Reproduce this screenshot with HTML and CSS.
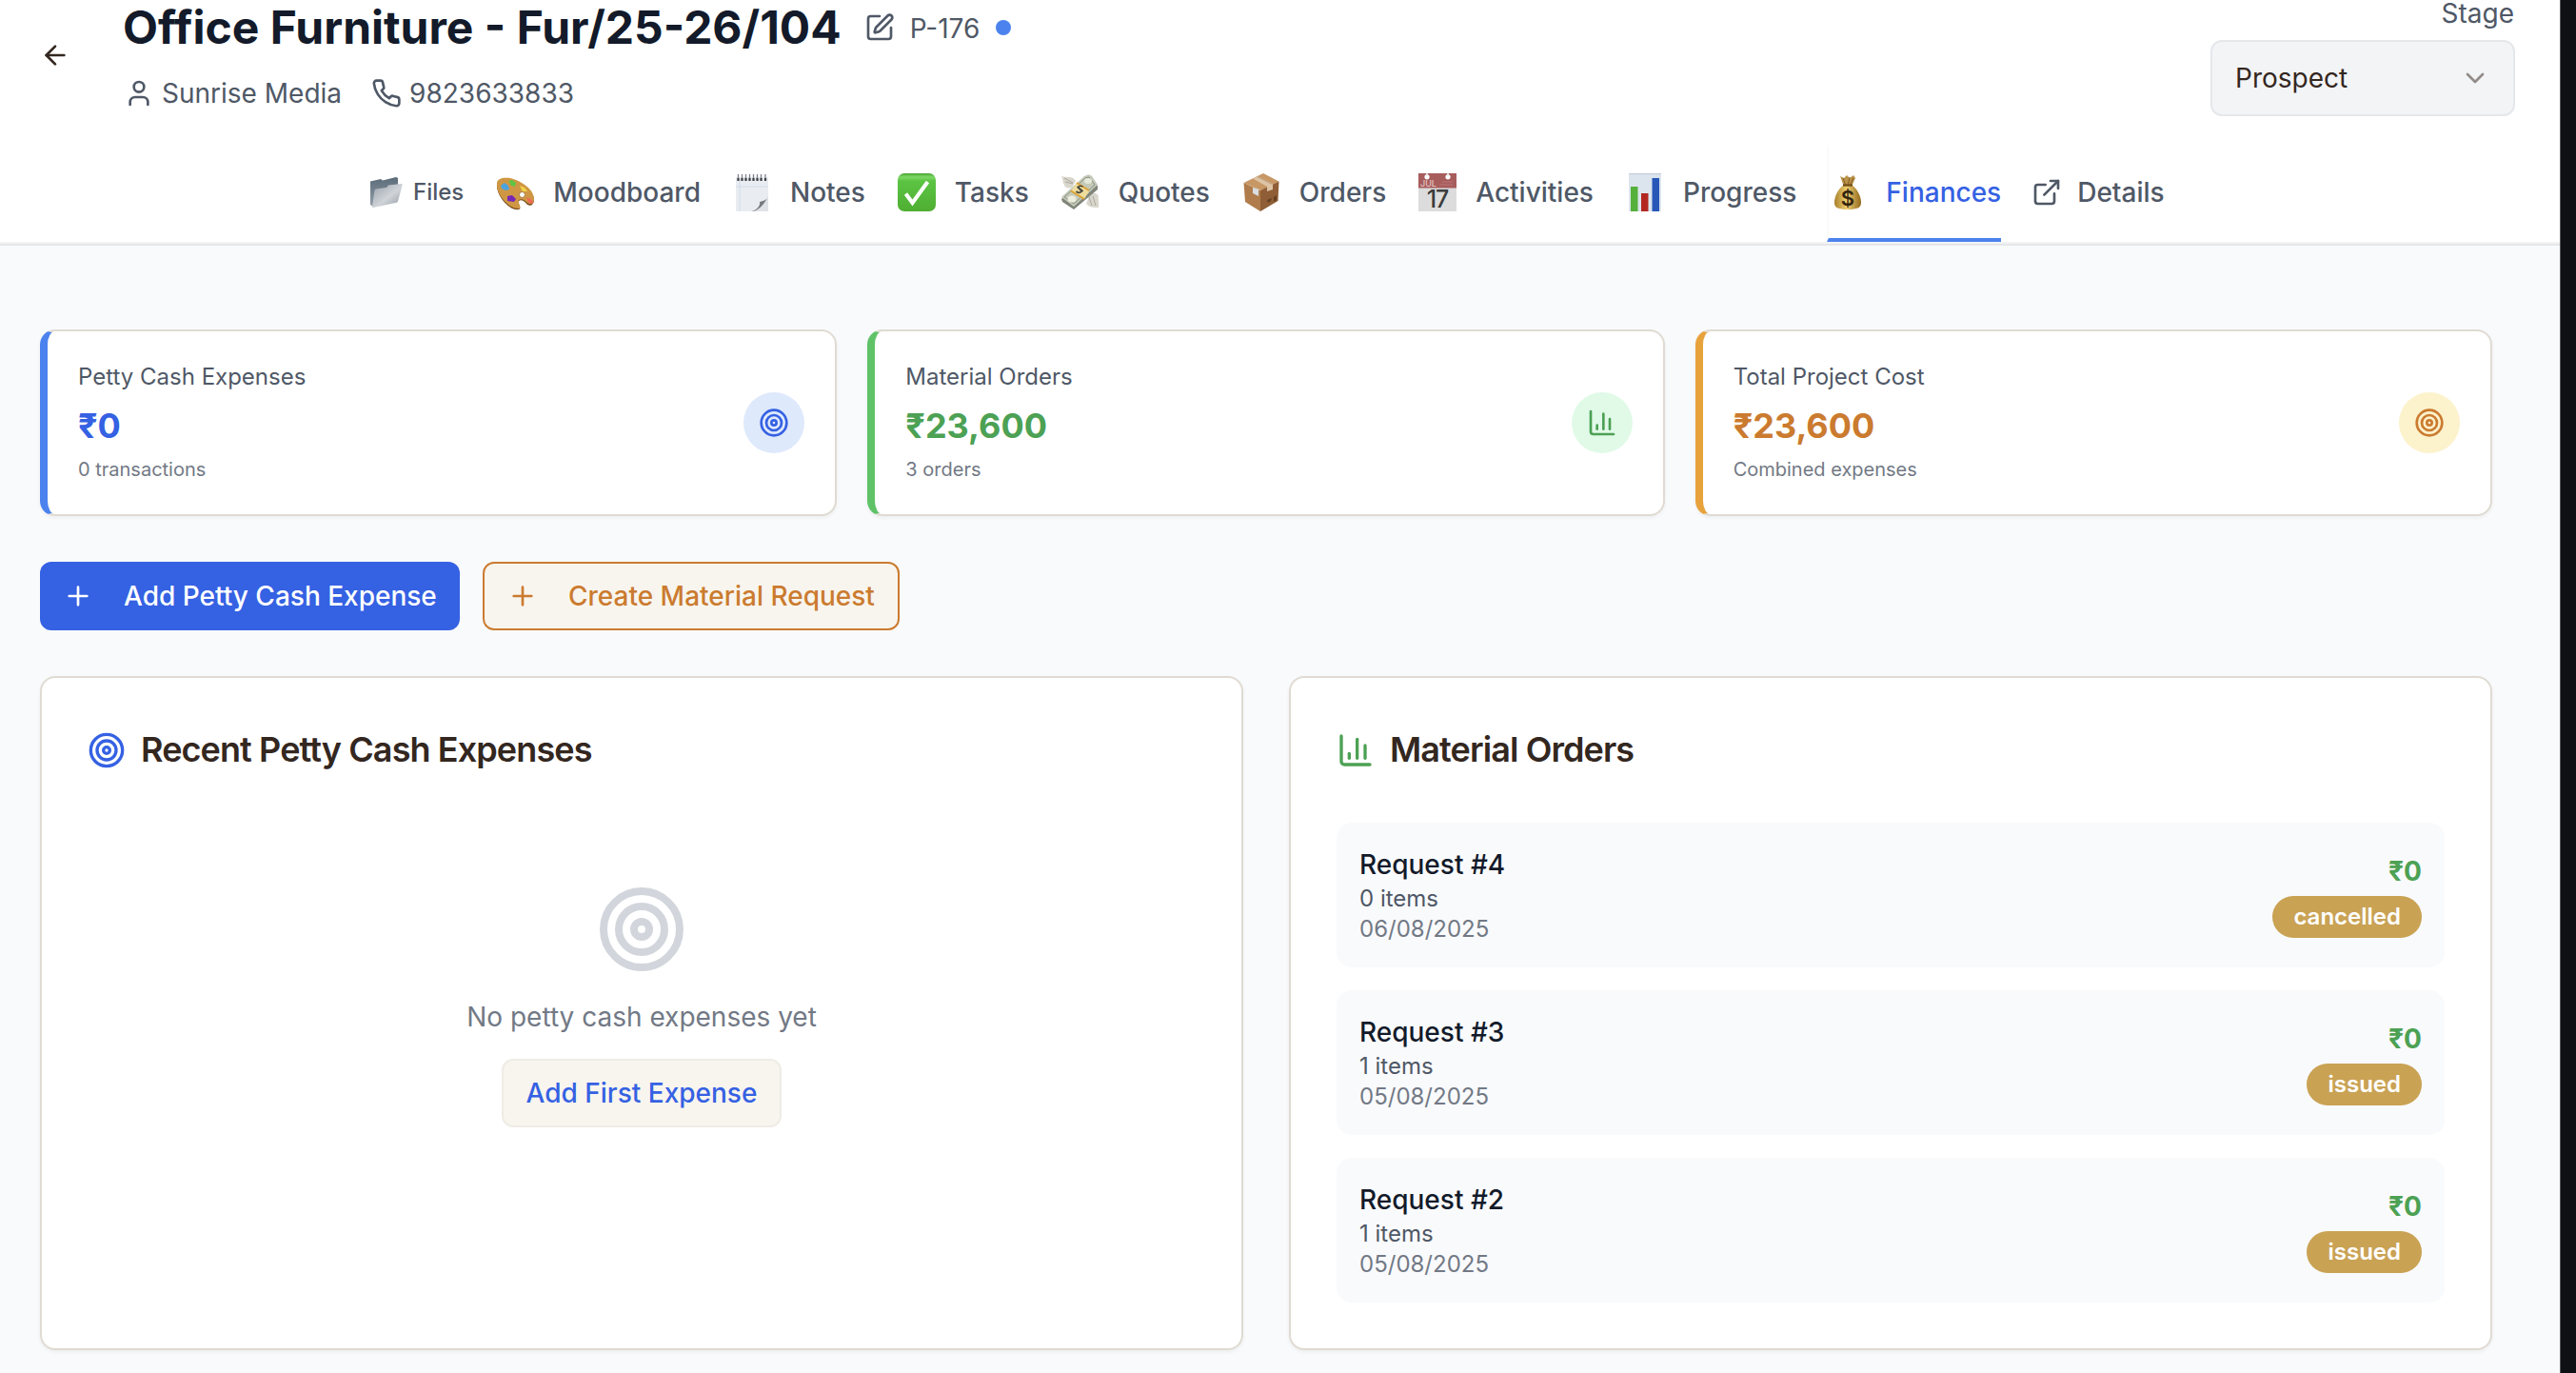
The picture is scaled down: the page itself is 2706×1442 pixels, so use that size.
FILE: index.html
```html
<!DOCTYPE html>
<html lang="en">
<head>
<meta charset="utf-8">
<title>Office Furniture - Finances</title>
<link rel="stylesheet" href="styles.css">
</head>
<body>
<svg class="defs" width="0" height="0" aria-hidden="true">
  <symbol id="target" viewBox="0 0 24 24"><circle cx="12" cy="12" r="10"/><circle cx="12" cy="12" r="6"/><circle cx="12" cy="12" r="2"/></symbol>
  <symbol id="chart" viewBox="0 0 24 24"><path d="M3 3v16a2 2 0 0 0 2 2h16"/><path d="M18 17V9"/><path d="M13 17V5"/><path d="M8 17v-3"/></symbol>
  <symbol id="plus" viewBox="0 0 24 24"><path d="M5 12h14M12 5v14"/></symbol>
</svg>
<div class="app">
  <header class="header">
    <div class="topbar">
      <button class="back" aria-label="Back"><svg class="icon" viewBox="0 0 24 24"><path d="m12 19-7-7 7-7"/><path d="M19 12H5"/></svg></button>
      <div class="project">
        <div class="title-row">
          <h1 class="title">Office Furniture - Fur/25-26/104</h1>
          <svg class="icon edit" viewBox="0 0 24 24"><path d="M12 3H5a2 2 0 0 0-2 2v14a2 2 0 0 0 2 2h14a2 2 0 0 0 2-2v-7"/><path d="M18.375 2.625a1 1 0 0 1 3 3l-9.013 9.014a2 2 0 0 1-.853.505l-2.873.84a.5.5 0 0 1-.62-.62l.84-2.873a2 2 0 0 1 .506-.852z"/></svg>
          <span class="code">P-176</span>
          <span class="dot"></span>
        </div>
        <div class="contact-row">
          <svg class="icon" viewBox="0 0 24 24"><path d="M19 21v-2a4 4 0 0 0-4-4H9a4 4 0 0 0-4 4v2"/><circle cx="12" cy="7" r="4"/></svg>
          <span class="client">Sunrise Media</span>
          <svg class="icon" viewBox="0 0 24 24"><path d="M22 16.92v3a2 2 0 0 1-2.18 2 19.79 19.79 0 0 1-8.63-3.07 19.5 19.5 0 0 1-6-6 19.79 19.79 0 0 1-3.07-8.67A2 2 0 0 1 4.11 2h3a2 2 0 0 1 2 1.72 12.84 12.84 0 0 0 .7 2.81 2 2 0 0 1-.45 2.11L8.09 9.91a16 16 0 0 0 6 6l1.27-1.27a2 2 0 0 1 2.11-.45 12.84 12.84 0 0 0 2.81.7A2 2 0 0 1 22 16.92z"/></svg>
          <span>9823633833</span>
        </div>
      </div>
      <div class="stage">
        <span class="stage-label">Stage</span>
        <div class="select"><span>Prospect</span><svg class="icon chevron" viewBox="0 0 24 24"><path d="m6 9 6 6 6-6"/></svg></div>
      </div>
    </div>
    <nav class="tabs">
      <a class="tab files">
        <svg class="emoji-sm" viewBox="0 0 34 34"><defs><linearGradient id="fb" x2="0" y2="1"><stop stop-color="#5b6b78"/><stop offset="1" stop-color="#93a0aa"/></linearGradient><linearGradient id="ff" x2="1" y2="1"><stop stop-color="#98a1aa"/><stop offset=".55" stop-color="#d0d4d9"/><stop offset="1" stop-color="#8e979f"/></linearGradient></defs><path d="M0 5.500 11 3l2 1.500L27 1l2 1v10L3 32l-3-2z" fill="url(#fb)"/><path d="M6 13.500 17 12l2-2.500L33 8q1 0 .7 1L29 26.500q-.4 1-1.400 1.300L3 33q-1.200.2-1-1L4.500 15q.2-1.200 1.500-1.500z" fill="url(#ff)"/></svg>
        <span>Files</span>
      </a>
      <a class="tab">
        <svg class="emoji" viewBox="0 0 40 40"><path d="M1 12C1 6 8 4 15 6c12 3 25 12 25 22 0 5-4 7-7 5-3-3-5-6-9-4-2 2 4 8 0 9C14 40 0 23 1 12z" fill="#7c5220"/><path d="M1 11C1 5 8 4 15 5c12 3 25 12 25 22 0 5-4 6-7 4-3-3-6-5-9-3-2 2 4 8 0 9C14 38 0 22 1 11z" fill="#cf9743"/><circle cx="27.500" cy="22.500" r="3" fill="#fff" stroke="#98642a" stroke-width=".8"/><path d="M5 13l4-3 4 3 1 4-4 1-4-2z" fill="#4aa3dc"/><path d="m13 8 4-1 4 3-1 4-4-1z" fill="#61c344"/><path d="m25 13 5 2 3 4-5 0z" fill="#f1d347"/><path d="m32 25 6 3 1 4-5-1z" fill="#ee6b58"/><path d="m12 24 5-1 4 4-2 3-7-1z" fill="#7926b5"/></svg>
        <span>Moodboard</span>
      </a>
      <a class="tab">
        <svg class="emoji" viewBox="0 0 40 40"><path d="M3 4h34v23L24 40H3z" fill="#e9edf2"/><path d="M3 14h34M7 7v33" stroke="#ccd7e4" stroke-width=".8"/><path d="M37 24v16H20c7-2 9-5 9-10 3 0 6-2 8-6z" fill="#dfe2e6"/><path d="M37 24c-2 5-6 5-9 6 1 5-4 9-9 10 7 0 13-6 18-16z" fill="#777b80"/><path d="M5.500 1v6M9.500 1v6M13.500 1v6M17.500 1v6M21.500 1v6M25.500 1v6M29.500 1v6M34 1v6" stroke="#7e838b" stroke-width="1.300"/><path d="M5.500 5v3M9.500 5v3M13.500 5v3M17.500 5v3M21.500 5v3M25.500 5v3M29.500 5v3M34 5v3" stroke="#3f4247" stroke-width="2.200"/></svg>
        <span>Notes</span>
      </a>
      <a class="tab">
        <svg class="emoji" viewBox="0 0 40 40"><defs><linearGradient id="ck" x2="0" y2="1"><stop stop-color="#48a434"/><stop offset=".1" stop-color="#7ed866"/><stop offset=".2" stop-color="#5cc443"/><stop offset="1" stop-color="#4fae32"/></linearGradient></defs><rect width="40" height="40" rx="7" fill="url(#ck)"/><path d="M8.500 21.500 15.500 31 31.500 9" fill="none" stroke="#fff" stroke-width="4"/></svg>
        <span>Tasks</span>
      </a>
      <a class="tab">
        <svg class="emoji" viewBox="0 0 40 40"><path d="M0 3c5 2 12-1 15 5l-4 7c-4 1-8 0-8-3C1 10 2 7 0 3zM39 36c-5 0-10 0-13-4l4-10c5-3 8 0 9 2-1 3 1 6 0 12z" fill="#d9d7cd"/><path d="m3 5 9 5M4 9l8 2M29 25l3 9M33 24l3 10" stroke="#aba99d" fill="none"/><path d="M0 27 28 6 38 13v4L13 38 1 30z" fill="#80857a"/><path d="M0 25 24 3q5-3 8 0l6 9-25 23z" fill="#c5c9b9"/><path d="m3 25 22-20 4-1 6 8-22 20z" fill="none" stroke="#8c9382"/><ellipse cx="28" cy="8" rx="4" ry="3" fill="#e5e8da"/><ellipse cx="11" cy="27" rx="4.500" ry="3.500" fill="#edeede"/><path d="M10 18.500 16 10l13 9-5 8z" fill="#eedc9c"/><path d="m10 18.500 14 8.500M16 10l13 8" stroke="#dda230" stroke-width="1.800"/><path d="M22.500 14c-4-2-6 1-3 3s0 5-4 2m1-5 6 5" stroke="#47473e" stroke-width="1.700" fill="none"/></svg>
        <span>Quotes</span>
      </a>
      <a class="tab">
        <svg class="emoji" viewBox="0 0 40 40"><path d="M1.500 10 22 0l16.500 8.500L20 18z" fill="#c79765"/><path d="M1.500 10 19 18v22L3 30z" fill="#b07c4b"/><path d="m19 18 19.500-9.500L37.500 29 19 40z" fill="#8f5e37"/><path d="m11 5.500 5-2.500 16 8v6l-6 2v-5z" fill="#dcc3a3"/><path d="m15.500 3.500 16 8" stroke="#b6926d" stroke-width=".8"/><path d="m11 15 6 2v7l-6-3z" fill="#d9dde1"/><path d="m26 28 5-2-1 3-3 2zM33 25l3-2v5l-3 2z" fill="#65401f"/></svg>
        <span>Orders</span>
      </a>
      <a class="tab">
        <svg class="emoji" viewBox="0 0 40 40"><path d="M0 0h40v40H0z" fill="#dcdcdc"/><path d="M0 0h40v15.500H0z" fill="#a85d5d"/><circle cx="9" cy="3.800" r="2.600" fill="#fff"/><circle cx="31" cy="3.800" r="2.600" fill="#fff"/><path d="M9 0v3M31 0v3" stroke="#eee" stroke-width="1.500"/><path d="M22 12h14M25 9h11" stroke="#b87575"/><text x="2" y="14" class="cal-month">JUL</text><text x="20" y="36" text-anchor="middle" class="cal-day">17</text></svg>
        <span>Activities</span>
      </a>
      <a class="tab">
        <svg class="emoji" viewBox="0 0 40 40"><path d="M3 0h34v40H3z" fill="#dce5ee"/><path d="M3 .6h34" stroke="#bccad8"/><path d="M5 14h7.500v26H5z" fill="#55b03c"/><path d="M16 21h7.500v19H16z" fill="#b32720"/><path d="M27.500 5H35v35h-7.500z" fill="#2758b8"/></svg>
        <span>Progress</span>
      </a>
      <a class="tab active">
        <svg class="emoji" viewBox="0 0 40 40"><defs><linearGradient id="mb"><stop stop-color="#a87f2a"/><stop offset=".45" stop-color="#edcf72"/><stop offset="1" stop-color="#94691d"/></linearGradient></defs><path d="M12 3l4 2 3-3 3 3 4-3 2 3-4 9h-8z" fill="#bb924a"/><path d="m15 5 3 8M22 4l-2 9M26 5l-4 8" stroke="#835f26" fill="none"/><path d="M16 12h8c6 4 10 12 10 19 0 5-4 7-14 7S6 36 6 31c0-7 4-15 10-19z" fill="url(#mb)"/><path d="M15 12.500h10" stroke="#75521a" stroke-width="2.400"/><text x="20" y="34" text-anchor="middle" class="money">$</text></svg>
        <span>Finances</span>
      </a>
      <a class="tab details">
        <svg class="icon" viewBox="0 0 24 24"><path d="M15 3h6v6"/><path d="M10 14 21 3"/><path d="M18 13v6a2 2 0 0 1-2 2H5a2 2 0 0 1-2-2V8a2 2 0 0 1 2-2h6"/></svg>
        <span>Details</span>
      </a>
    </nav>
  </header>
  <main class="content">
    <section class="stats">
      <article class="stat blue"><div class="stat-text"><p class="stat-label">Petty Cash Expenses</p><p class="stat-value">₹0</p><p class="stat-sub">0 transactions</p></div><span class="stat-icon"><svg class="icon"><use href="#target"/></svg></span></article>
      <article class="stat green"><div class="stat-text"><p class="stat-label">Material Orders</p><p class="stat-value">₹23,600</p><p class="stat-sub">3 orders</p></div><span class="stat-icon"><svg class="icon"><use href="#chart"/></svg></span></article>
      <article class="stat orange"><div class="stat-text"><p class="stat-label">Total Project Cost</p><p class="stat-value">₹23,600</p><p class="stat-sub">Combined expenses</p></div><span class="stat-icon"><svg class="icon"><use href="#target"/></svg></span></article>
    </section>
    <div class="actions">
      <button class="btn primary"><svg class="icon"><use href="#plus"/></svg>Add Petty Cash Expense</button>
      <button class="btn outline"><svg class="icon"><use href="#plus"/></svg>Create Material Request</button>
    </div>
    <section class="panels">
      <article class="panel">
        <h2 class="panel-title"><svg class="icon blue-ink"><use href="#target"/></svg><span>Recent Petty Cash Expenses</span></h2>
        <div class="empty">
          <svg class="icon"><use href="#target"/></svg>
          <p>No petty cash expenses yet</p>
          <button class="btn soft">Add First Expense</button>
        </div>
      </article>
      <article class="panel">
        <h2 class="panel-title"><svg class="icon green-ink"><use href="#chart"/></svg><span>Material Orders</span></h2>
        <div class="orders">
          <div class="order"><div><p class="order-name">Request #4</p><p class="order-items">0 items</p><p class="order-date">06/08/2025</p></div><div class="order-side"><span class="amount">₹0</span><span class="badge">cancelled</span></div></div>
          <div class="order"><div><p class="order-name">Request #3</p><p class="order-items">1 items</p><p class="order-date">05/08/2025</p></div><div class="order-side"><span class="amount">₹0</span><span class="badge">issued</span></div></div>
          <div class="order"><div><p class="order-name">Request #2</p><p class="order-items">1 items</p><p class="order-date">05/08/2025</p></div><div class="order-side"><span class="amount">₹0</span><span class="badge">issued</span></div></div>
        </div>
      </article>
    </section>
  </main>
</div>
</body>
</html>
```
FILE: styles.css
```css
* { box-sizing: border-box; margin: 0; padding: 0; }
body { background: #0e1014; font-family: Inter, "Liberation Sans", sans-serif; font-size: 28px; line-height: 40px; color: #33271f; overflow: hidden; }
button { font: inherit; border: 0; background: none; color: inherit; }
.defs { display: block; }
.app { width: 2690px; height: 1442px; background: #f9fafc; border-right: 1px solid #55585d; overflow: hidden; }
.icon { width: 32px; height: 32px; flex: none; fill: none; stroke: currentColor; stroke-width: 2; stroke-linecap: round; stroke-linejoin: round; }

/* Header */
.header { height: 258px; background: #fff; border-bottom: 2px solid #e5e7ea; box-shadow: inset 0 -2px #f3f3f4; }
.topbar { display: flex; height: 154px; padding: 0 47px 0 42px; }
.back { width: 32px; height: 32px; margin-top: 42px; }
.back .icon { display: block; }
.project { margin-left: 56px; flex: 1; color: #4f5866; }
.title-row { display: flex; align-items: center; height: 58px; }
.title { margin-left: -1px; font-size: 48px; line-height: 58px; font-weight: 700; color: #131a2a; white-space: nowrap; }
.edit { margin-left: 24px; }
.code { margin-left: 16px; padding-top: 1px; }
.dot { width: 16px; height: 16px; margin-left: 17px; border-radius: 50%; background: #4c82ee; }
.contact-row { display: flex; align-items: center; height: 80px; gap: 8px; }
.client { margin-right: 23px; }
.stage { display: flex; flex-direction: column; align-items: flex-end; color: #4f5866; }
.stage-label { height: 42px; line-height: 28px; padding-right: 1px; }
.select { display: flex; align-items: center; justify-content: space-between; width: 320px; height: 80px; padding: 0 24px; border: 2px solid #e5e7eb; border-radius: 12px; background: #f3f4f6; color: #33271f; }
.chevron { opacity: .5; }
.tabs { display: flex; height: 100px; padding-left: 387px; gap: 32px; font-weight: 500; color: #4f5866; }
.tab { display: flex; align-items: center; gap: 20px; height: 100px; border: 2px solid transparent; border-width: 0 0 4px 2px; white-space: nowrap; }
.tab.files { gap: 11px; font-size: 24px; }
.tab.details { gap: 16px; border-left: 0; }
.tab.active { color: #3561e3; border-color: #fafafb; border-bottom-color: #4c82ee; }
.emoji { width: 40px; height: 40px; flex: none; overflow: visible; }
.emoji-sm { width: 34px; height: 34px; flex: none; }
.cal-month { font: 500 9px Inter, sans-serif; fill: #e2c4c4; }
.cal-day { font: 500 25px Inter, sans-serif; fill: #3c3c3c; letter-spacing: -1px; }
.money { font: 600 22px Inter, sans-serif; fill: #33240d; }

/* Summary cards */
.content { padding: 88px 71px 0 42px; }
.stats { display: grid; grid-template-columns: repeat(3, 1fr); gap: 32px; }
.stat { display: flex; align-items: center; justify-content: space-between; height: 196px; padding: 32px; border: 2px solid #e0dbd2; border-left-width: 8px; border-radius: 16px; background: #fff; box-shadow: 0 2px 4px rgba(0, 0, 0, .05); }
.stat-label { font-size: 24px; line-height: 32px; color: #4f5866; }
.stat-value { font-size: 36px; line-height: 70px; font-weight: 700; }
.stat-sub { font-size: 20px; line-height: 22px; padding-bottom: 4px; color: #727985; }
.stat-icon { display: flex; align-items: center; justify-content: center; width: 64px; height: 64px; border-radius: 50%; }
.blue { border-left-color: #4c82ee; }
.blue .stat-value, .blue .stat-icon { color: #3561e3; }
.blue .stat-icon { background: #dee9fc; }
.green { border-left-color: #5fc267; }
.green .stat-value, .green .stat-icon { color: #4ca154; }
.green .stat-icon { background: #e1fae8; }
.orange { border-left-color: #e8a23c; }
.orange .stat-value, .orange .stat-icon { color: #cb7b2f; }
.orange .stat-icon { background: #fcf2cc; }

.actions { display: flex; gap: 24px; margin-top: 48px; }
.btn { display: flex; align-items: center; height: 72px; padding: 0 24px; border-radius: 12px; font-weight: 500; white-space: nowrap; }
.btn .icon { margin-right: 32px; }
.primary { width: 441px; background: #3561e3; color: #fff; }
.outline { border: 2px solid #cb7b2f; background: #f8f5ee; color: #cb7b2f; }
.soft { border: 2px solid #efece6; background: #f8f5ee; color: #3561e3; }

/* Panels */
.panels { display: grid; grid-template-columns: 1fr 1fr; gap: 48px; margin-top: 48px; }
.panel { height: 708px; padding: 48px; border: 2px solid #e0dbd2; border-radius: 16px; background: #fff; box-shadow: 0 2px 4px rgba(0, 0, 0, .05); }
.panel-title { display: flex; align-items: center; gap: 16px; height: 56px; font-size: 36px; font-weight: 600; letter-spacing: -.9px; }
.panel-title span { padding-bottom: 2px; }
.panel-title .icon { width: 40px; height: 40px; }
.blue-ink { color: #3561e3; }
.green-ink { color: #4ca154; }
.empty { display: flex; flex-direction: column; align-items: center; padding-top: 112px; color: #727985; }
.empty > .icon { width: 96px; height: 96px; color: #d2d6dc; }
.empty p { margin: 24px 0; }
.orders { display: flex; flex-direction: column; gap: 24px; margin-top: 48px; }
.order { display: flex; align-items: center; justify-content: space-between; height: 152px; padding: 24px; border-radius: 16px; background: #f9fafc; }
.order-name { font-weight: 500; color: #131a2a; }
.order-items, .order-date { font-size: 24px; line-height: 32px; color: #4f5866; }
.order-date { color: #727985; }
.order-side { display: flex; flex-direction: column; align-items: flex-end; gap: 6px; }
.amount { font-weight: 700; color: #4ca154; }
.badge { height: 44px; padding: 0 22px; border-radius: 22px; background: #c9a254; color: #fff; font-size: 24px; line-height: 44px; font-weight: 600; }
```
